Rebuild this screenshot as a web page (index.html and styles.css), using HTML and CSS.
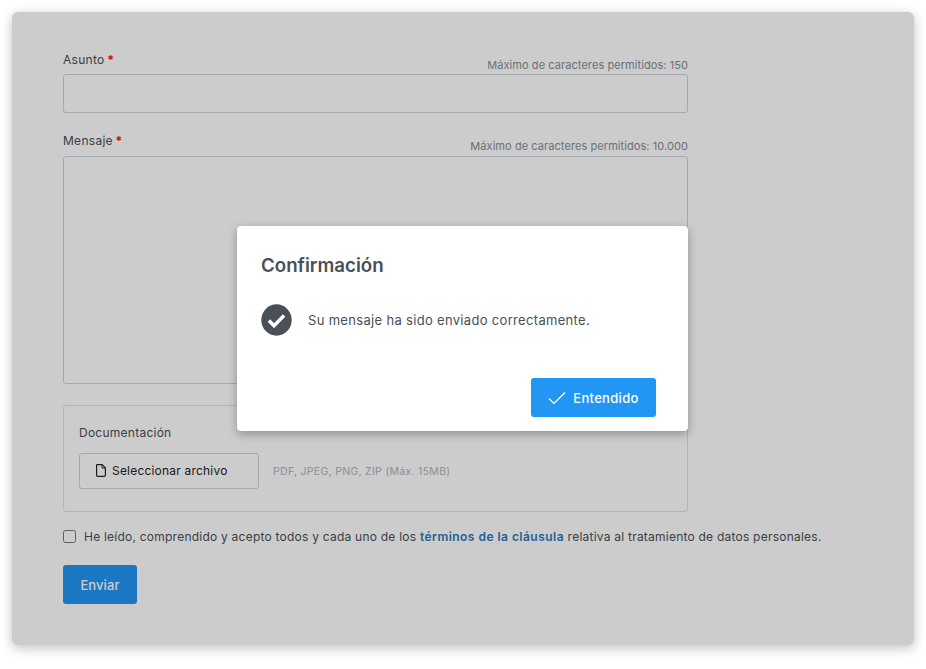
FILE: index.html
```html
<!DOCTYPE html>
<html lang="es">
<head>
<meta charset="utf-8">
<title>Formulario</title>
<link rel="stylesheet" href="styles.css">
</head>
<body>
<main class="card">
  <form class="form">
    <div class="field field-subject">
      <div class="field-head">
        <label class="label">Asunto <span class="req">*</span></label>
        <span class="hint">Máximo de caracteres permitidos: 150</span>
      </div>
      <input class="input" type="text">
    </div>
    <div class="field field-message">
      <div class="field-head">
        <label class="label">Mensaje <span class="req">*</span></label>
        <span class="hint">Máximo de caracteres permitidos: 10.000</span>
      </div>
      <textarea class="textarea"></textarea>
    </div>
    <section class="docs">
      <div class="docs-title">Documentación</div>
      <div class="docs-row">
        <button type="button" class="file-btn">
          <svg class="file-icon" width="10" height="13" viewBox="0 0 10 13" fill="none"><path d="M1.3 .6H6.2L9.4 3.8V11.3a1.1 1.1 0 0 1-1.1 1.1H1.7A1.1 1.1 0 0 1 .6 11.3V1.3A.7.7 0 0 1 1.3 .6Z" stroke="#212529" stroke-width="1.2" stroke-linejoin="round"/><path d="M6 .8V4H9.2" stroke="#212529" stroke-width="1"/></svg>
          Seleccionar archivo
        </button>
        <span class="docs-hint">PDF, JPEG, PNG, ZIP (Máx. 15MB)</span>
      </div>
    </section>
    <label class="consent">
      <input class="check" type="checkbox">
      <span>He leído, comprendido y acepto todos y cada uno de los <a class="link" href="#">términos de la cláusula</a> relativa al tratamiento de datos personales.</span>
    </label>
    <button type="button" class="send">Enviar</button>
  </form>
  <div class="overlay">
    <div class="dialog">
      <h2 class="dialog-title">Confirmación</h2>
      <div class="dialog-body">
        <svg class="ok-icon" width="31" height="32" viewBox="0 0 32 32" preserveAspectRatio="none"><circle cx="16" cy="16" r="15.7" fill="#495057"/><path d="M8.2 16.6 13.4 21.8 23.8 11.4" fill="none" stroke="#fff" stroke-width="3.6"/></svg>
        <p class="dialog-text">Su mensaje ha sido enviado correctamente.</p>
      </div>
      <div class="dialog-foot">
        <button type="button" class="ok-btn">
          <svg width="18" height="14" viewBox="0 0 18 14" fill="none"><path d="M1 7.5 6 12.5 17 1.5" stroke="#fff" stroke-width="1.2"/></svg>
          Entendido
        </button>
      </div>
    </div>
  </div>
</main>
</body>
</html>
```
FILE: styles.css
```css
* { box-sizing: border-box; }
html, body { height: 100%; }
body {
  margin: 0;
  padding: 12px;
  background: #fff;
  font-family: Inter, "Liberation Sans", sans-serif;
  font-size: 13px;
  color: #495057;
  overflow: hidden;
}
.card {
  position: relative;
  width: 902px;
  height: 633px;
  border-radius: 6px;
  background: #fff;
  box-shadow: 0 3px 12px rgba(0, 0, 0, .25);
  padding: 38px 51px;
  overflow: hidden;
}
.form { width: 625px; display: flex; flex-direction: column; }
.field-head { display: flex; justify-content: space-between; align-items: flex-end; height: 24px; padding-bottom: 3px; line-height: 16px; }
.field-subject .field-head { padding-bottom: 3px; }
.field-subject .label { top: -3px; }
.label { font-size: 12px; letter-spacing: .28px; position: relative; top: -4px; }
.req { color: #f00; font-weight: 700; margin-left: -1px; }
.hint { font-size: 11px; color: #868e96; line-height: 14px; letter-spacing: .07px; }
.field-subject .hint { position: relative; top: 1px; }
.field-message { margin-top: 19px; }
.input, .textarea {
  display: block;
  width: 100%;
  border: 1px solid #ced4da;
  border-radius: 3px;
  background: #fff;
  outline: 0;
  padding: 0;
}
.input { height: 39px; }
.textarea { height: 228px; resize: none; }
.docs {
  margin-top: 21px;
  height: 107px;
  border: 1px solid #dee2e6;
  border-radius: 3px;
  padding: 19px 15px;
}
.docs-title { line-height: 16px; font-size: 12px; letter-spacing: .25px; }
.docs-row { display: flex; align-items: center; margin-top: 12px; }
.file-btn {
  width: 180px;
  height: 36px;
  display: flex;
  align-items: center;
  gap: 6px;
  padding: 0 0 2px 16px;
  background: #fff;
  border: 1px solid #ced4da;
  border-radius: 3px;
  font: inherit;
  font-size: 12px;
  color: #212529;
  letter-spacing: .2px;
}
.docs-hint { margin-left: 14px; font-size: 10.5px; color: #adb5bd; letter-spacing: .3px; }
.consent { display: flex; align-items: center; margin-top: 16px; margin-bottom: 1px; width: 800px; height: 16px; font-size: 12px; letter-spacing: .23px; white-space: nowrap; }
.check { appearance: none; width: 13px; height: 13px; margin: 0 8px 0 0; border: 1px solid #767676; border-radius: 2.5px; background: #fff; }
.link { color: #2b7ab8; font-weight: 600; letter-spacing: .47px; text-decoration: none; }
.send {
  margin-top: 20px;
  width: 74px;
  height: 39px;
  border: 0;
  border-radius: 3px;
  background: #2196f3;
  color: #fff;
  font: inherit;
  font-size: 13px;
  font-weight: 500;
  letter-spacing: .1px;
}
.overlay {
  position: absolute;
  inset: 0;
  display: flex;
  align-items: center;
  justify-content: center;
  padding-right: 1px;
  background: rgba(0, 0, 0, .2);
}
.dialog {
  width: 451px;
  height: 205px;
  background: #fff;
  border-radius: 4px;
  box-shadow: 0 3px 10px rgba(0, 0, 0, .3);
  padding: 28px 32px 14px 24px;
  display: flex;
  flex-direction: column;
}
.dialog-title { margin: 1px 0 -1px; font-size: 18.7px; line-height: 22px; font-weight: 600; color: #495057; }
.dialog-body { display: flex; align-items: center; gap: 16px; margin-top: 28px; }
.dialog-text { margin: 0; font-size: 13px; letter-spacing: .32px; }
.dialog-foot { margin-top: auto; display: flex; justify-content: flex-end; }
.ok-btn {
  width: 125px;
  height: 39px;
  display: flex;
  align-items: center;
  justify-content: center;
  gap: 7px;
  border: 0;
  border-radius: 3px;
  background: #2196f3;
  color: #fff;
  font: inherit;
  font-size: 13px;
  font-weight: 500;
  letter-spacing: .3px;
}
```
